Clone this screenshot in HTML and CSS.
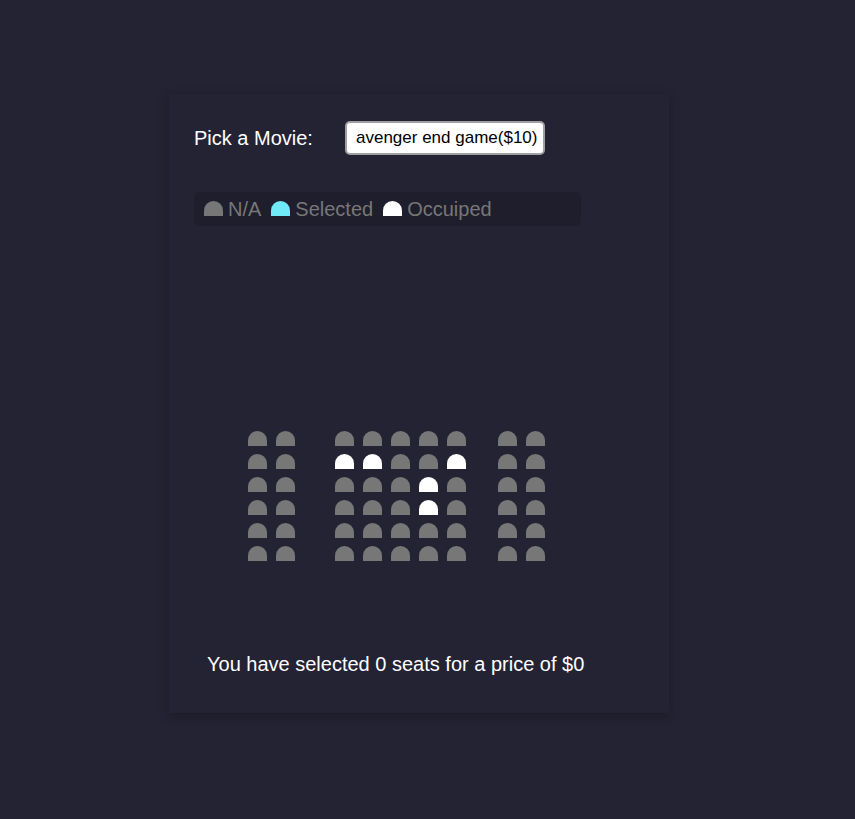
FILE: index.html
```html
<!DOCTYPE html>
<html>
<head>
<meta charset="utf-8">
<link rel="stylesheet" href="styles.css">
</head>
<body>
<div class="card">
  <div class="picker">
    <label class="picker-label">Pick a Movie:</label>
    <div class="select">avenger end game($10)</div>
  </div>
  <ul class="legend">
    <li><span class="seat"></span><span class="legend-text">N/A</span></li>
    <li><span class="seat selected"></span><span class="legend-text">Selected</span></li>
    <li><span class="seat occupied"></span><span class="legend-text">Occuiped</span></li>
  </ul>
  <div class="hall">
    <div class="row"><div class="group"><span class="seat"></span><span class="seat"></span></div><div class="group mid"><span class="seat"></span><span class="seat"></span><span class="seat"></span><span class="seat"></span><span class="seat"></span></div><div class="group right"><span class="seat"></span><span class="seat"></span></div></div>
    <div class="row"><div class="group"><span class="seat"></span><span class="seat"></span></div><div class="group mid"><span class="seat occupied"></span><span class="seat occupied"></span><span class="seat"></span><span class="seat"></span><span class="seat occupied"></span></div><div class="group right"><span class="seat"></span><span class="seat"></span></div></div>
    <div class="row"><div class="group"><span class="seat"></span><span class="seat"></span></div><div class="group mid"><span class="seat"></span><span class="seat"></span><span class="seat"></span><span class="seat occupied"></span><span class="seat"></span></div><div class="group right"><span class="seat"></span><span class="seat"></span></div></div>
    <div class="row"><div class="group"><span class="seat"></span><span class="seat"></span></div><div class="group mid"><span class="seat"></span><span class="seat"></span><span class="seat"></span><span class="seat occupied"></span><span class="seat"></span></div><div class="group right"><span class="seat"></span><span class="seat"></span></div></div>
    <div class="row"><div class="group"><span class="seat"></span><span class="seat"></span></div><div class="group mid"><span class="seat"></span><span class="seat"></span><span class="seat"></span><span class="seat"></span><span class="seat"></span></div><div class="group right"><span class="seat"></span><span class="seat"></span></div></div>
    <div class="row"><div class="group"><span class="seat"></span><span class="seat"></span></div><div class="group mid"><span class="seat"></span><span class="seat"></span><span class="seat"></span><span class="seat"></span><span class="seat"></span></div><div class="group right"><span class="seat"></span><span class="seat"></span></div></div>
  </div>
  <p class="summary">You have selected <span>0</span> seats for a price of $<span>0</span></p>
</div>
</body>
</html>
```
FILE: styles.css
```css
* { box-sizing: border-box; }
html, body { margin: 0; padding: 0; }
body {
  background: #242333;
  font-family: "Liberation Sans", Arial, sans-serif;
  color: #fff;
  height: 819px;
  padding-top: 94px;
  padding-left: 169px;
}
.card {
  width: 500px;
  height: 619px;
  background: #242333;
  box-shadow: 0 3px 10px rgba(0, 0, 0, 0.25);
  padding: 27px 25px 0 25px;
}
.picker {
  display: flex;
  align-items: center;
}
.picker-label {
  font-size: 20px;
  width: 151px;
}
.select {
  width: 200px;
  height: 34px;
  background: #fff;
  color: #000;
  border: 2px solid #a0a0a0;
  border-radius: 5px;
  font-size: 17px;
  padding-left: 9px;
  line-height: 30px;
}
.legend {
  list-style: none;
  margin: 37px 0 0 0;
  padding: 0 10px;
  width: 387px;
  height: 34px;
  display: flex;
  align-items: center;
  gap: 10px;
  background: rgba(0, 0, 0, 0.12);
  border-radius: 5px;
}
.legend li {
  display: flex;
  align-items: center;
}
.legend .seat { margin-right: 5px; margin-top: -1px; }
.legend-text {
  font-size: 20px;
  color: #777;
}
.seat {
  display: inline-block;
  width: 19px;
  height: 15px;
  background: #777;
  border-top-left-radius: 10px;
  border-top-right-radius: 10px;
}
.seat.selected { background: #6feaf6; }
.seat.occupied { background: #fff; }
.hall {
  margin-top: 205px;
  margin-left: 54px;
  display: flex;
  flex-direction: column;
  gap: 8px;
}
.row {
  display: flex;
}
.group {
  display: flex;
  gap: 9px;
}
.group.mid { margin-left: 40px; }
.group.right { margin-left: 32px; }
.summary {
  margin: 92px 0 0 13px;
  font-size: 20px;
}
```
